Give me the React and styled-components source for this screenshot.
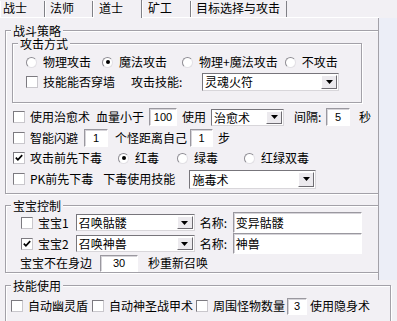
import React from 'react';
import styled, { createGlobalStyle } from 'styled-components';

const BG = '#f2f0f4';
const SHADOW = '#a3a1a8';
const DARK = '#808086';

const Global = createGlobalStyle`
  html, body { margin: 0; padding: 0; background: ${BG}; }
  body {
    font-family: "Noto Sans CJK SC", "Liberation Sans", sans-serif;
    font-size: 12px;
    color: #000;
  }
`;

const Screen = styled.div`
  width: 397px;
  height: 321px;
  overflow: hidden;
  display: flex;
  flex-direction: column;
  background: ${BG};
`;

const TabStrip = styled.div`
  box-sizing: border-box;
  width: 379px;
  height: 18px;
  display: flex;
  align-items: flex-end;
  border-bottom: 1px solid #fff;
`;

const Tab = styled.div`
  box-sizing: border-box;
  flex: none;
  width: ${p => p.$w}px;
  height: ${p => (p.$active ? 18 : 16)}px;
  margin-bottom: ${p => (p.$active ? -1 : 0)}px;
  padding-left: ${p => p.$pl}px;
  padding-top: ${p => (p.$active ? 1 : 0)}px;
  border-left: 1px solid #fff;
  border-right: 1px solid ${DARK};
  background: ${BG};
  line-height: 14px;
  white-space: nowrap;
`;

const Main = styled.div`
  display: flex;
  height: 262px;
`;

const Panel = styled.div`
  box-sizing: border-box;
  width: 379px;
  height: 262px;
  flex: none;
  overflow: hidden;
  border-right: 1px solid ${SHADOW};
  padding: 12px 0 0 5px;
  display: flex;
  flex-direction: column;
`;

const Strip = styled.div`
  flex: 1;
  background: #eceef7;
`;

const Group = styled.div`
  box-sizing: border-box;
  flex: none;
  width: ${p => p.$w}px;
  margin: ${p => p.$m || '0'};
  border: 1px solid ${SHADOW};
  box-shadow: inset 1px 1px 0 #fff, 1px 1px 0 #fff;
  padding: 0 0 ${p => p.$pb || 0}px 0;
  display: flex;
  flex-direction: column;
`;

const Legend = styled.div`
  align-self: flex-start;
  margin: -7px 0 0 5px;
  padding: 0 2px;
  height: 13px;
  line-height: 13px;
  background: ${BG};
  white-space: nowrap;
`;

const Row = styled.div`
  display: flex;
  align-items: center;
  height: ${p => p.$h || 20}px;
  margin-top: ${p => p.$mt || 0}px;
  padding-left: ${p => p.$pl || 0}px;
  white-space: nowrap;
`;

const Text = styled.span`
  flex: none;
  margin-left: ${p => p.$ml || 0}px;
  width: ${p => (p.$w ? `${p.$w}px` : 'auto')};
  line-height: 14px;
  white-space: nowrap;
`;

const Option = styled.label`
  flex: none;
  display: flex;
  align-items: center;
  gap: ${p => p.$gap || 6}px;
  margin-left: ${p => p.$ml || 0}px;
  line-height: 14px;
`;

const RadioCircle = styled.span`
  box-sizing: border-box;
  width: 11px;
  height: 11px;
  flex: none;
  border-radius: 50%;
  background: #fff;
  border: 1px solid;
  border-color: #8e8c93 #e2e0e5 #e2e0e5 #8e8c93;
  display: flex;
  align-items: center;
  justify-content: center;
  &::after {
    content: '';
    display: ${p => (p.$on ? 'block' : 'none')};
    width: 4px;
    height: 4px;
    border-radius: 50%;
    background: #000;
  }
`;

const CheckBox = styled.span`
  box-sizing: border-box;
  width: 12px;
  height: 12px;
  flex: none;
  background: #fff;
  border: 1px solid;
  border-color: #7c7a80 #c9c7cc #c9c7cc #7c7a80;
  display: flex;
  align-items: center;
  justify-content: center;
`;

const Field = styled.div`
  box-sizing: border-box;
  flex: none;
  width: ${p => p.$w}px;
  height: ${p => p.$h || 18}px;
  margin-left: ${p => p.$ml || 0}px;
  background: #fff;
  border: 1px solid;
  border-color: #9a989f #ffffff #ffffff #9a989f;
  box-shadow: inset 1px 1px 0 #d6d4d9;
  display: flex;
  align-items: center;
  justify-content: ${p => (p.$left ? 'flex-start' : 'center')};
  padding-left: ${p => (p.$left ? 2 : 0)}px;
  font-family: ${p => (p.$num ? '"Liberation Sans", sans-serif' : 'inherit')};
  font-size: ${p => (p.$num ? 11 : 12)}px;
  line-height: 14px;
  overflow: hidden;
`;

const ComboBox = styled.div`
  box-sizing: border-box;
  flex: none;
  width: ${p => p.$w}px;
  height: ${p => p.$h || 18}px;
  margin-left: ${p => p.$ml || 0}px;
  background: #fff;
  border: 1px solid;
  border-color: #77757b #d8d6da #d8d6da #77757b;
  display: flex;
  align-items: stretch;
`;

const ComboText = styled.span`
  flex: 1;
  padding-left: 2px;
  line-height: ${p => p.$lh}px;
  white-space: nowrap;
  overflow: hidden;
`;

const ComboButton = styled.span`
  box-sizing: border-box;
  flex: none;
  width: 16px;
  margin: 1px;
  background: #eceaee;
  border: 1px solid;
  border-color: #ffffff #6e6c72 #6e6c72 #ffffff;
  display: flex;
  align-items: center;
  justify-content: center;
`;

const Radio = ({ on, ml, children }) => (
  <Option $ml={ml}>
    <RadioCircle $on={on} />
    <span>{children}</span>
  </Option>
);

const Check = ({ on, ml, children }) => (
  <Option $ml={ml} $gap={5}>
    <CheckBox>
      {on && (
        <svg width="8" height="8" viewBox="0 0 8 8">
          <polyline points="0.8,3.6 2.9,5.8 7.2,1.2" fill="none" stroke="#000" strokeWidth="1.7" />
        </svg>
      )}
    </CheckBox>
    <span>{children}</span>
  </Option>
);

const Combo = ({ w, h = 18, ml, children }) => (
  <ComboBox $w={w} $h={h} $ml={ml}>
    <ComboText $lh={h - 2}>{children}</ComboText>
    <ComboButton>
      <svg width="7" height="4" viewBox="0 0 7 4">
        <polygon points="0,0 7,0 3.5,4" fill="#000" />
      </svg>
    </ComboButton>
  </ComboBox>
);

export default function App() {
  return (
    <Screen>
      <Global />
      <TabStrip>
        <Tab $w={45} $pl={2}>战士</Tab>
        <Tab $w={48} $pl={4}>法师</Tab>
        <Tab $w={49} $pl={5} $active>道士</Tab>
        <Tab $w={49} $pl={5}>矿工</Tab>
        <Tab $w={96} $pl={4}>目标选择与攻击</Tab>
      </TabStrip>

      <Main>
        <Panel>
          <Group $w={374} $pb={4}>
            <Legend>战斗策略</Legend>
            <Group $w={350} $m="6px 0 0 6px" $pb={10}>
              <Legend>攻击方式</Legend>
              <Row $mt={2} $pl={13}>
                <Radio>物理攻击</Radio>
                <Radio ml={11} on>魔法攻击</Radio>
                <Radio ml={15}>物理+魔法攻击</Radio>
                <Radio ml={7}>不攻击</Radio>
              </Row>
              <Row $pl={13}>
                <Check>技能能否穿墙</Check>
                <Text $ml={16} $w={52}>攻击技能:</Text>
                <Combo w={137} ml={19}>灵魂火符</Combo>
              </Row>
            </Group>

            <Row $mt={4} $pl={7}>
              <Check>使用治愈术</Check>
              <Text $ml={6}>血量小于</Text>
              <Field $w={28} $ml={5} $num>100</Field>
              <Text $ml={5}>使用</Text>
              <Combo w={73} h={17} ml={5}>治愈术</Combo>
              <Text $ml={10} $w={28}>间隔:</Text>
              <Field $w={24} $ml={4} $num>5</Field>
              <Text $ml={9}>秒</Text>
            </Row>
            <Row $mt={1} $pl={7}>
              <Check>智能闪避</Check>
              <Field $w={24} $ml={6} $num>1</Field>
              <Text $ml={7}>个怪距离自己</Text>
              <Field $w={23} $ml={3} $num>1</Field>
              <Text $ml={5}>步</Text>
            </Row>
            <Row $pl={7}>
              <Check on>攻击前先下毒</Check>
              <Radio ml={16} on>红毒</Radio>
              <Radio ml={18}>绿毒</Radio>
              <Radio ml={26}>红绿双毒</Radio>
            </Row>
            <Row $mt={1} $pl={7}>
              <Check>PK前先下毒</Check>
              <Text $ml={10}>下毒使用技能</Text>
              <Combo w={127} h={19} ml={14}>施毒术</Combo>
            </Row>
          </Group>

          <Group $w={374} $m="11px 0 0 0">
            <Legend>宝宝控制</Legend>
            <Row $h={21} $pl={15}>
              <Check>宝宝1</Check>
              <Combo w={119} h={17} ml={7}>召唤骷髅</Combo>
              <Text $ml={5} $w={32}>名称:</Text>
              <Field $w={129} $h={21} $ml={1} $left>变异骷髅</Field>
            </Row>
            <Row $h={21} $pl={15}>
              <Check on>宝宝2</Check>
              <Combo w={119} h={17} ml={7}>召唤神兽</Combo>
              <Text $ml={5} $w={32}>名称:</Text>
              <Field $w={129} $h={21} $ml={1} $left>神兽</Field>
            </Row>
            <Row $h={18} $pl={14}>
              <Text>宝宝不在身边</Text>
              <Field $w={38} $h={17} $ml={8} $num>30</Field>
              <Text $ml={10}>秒重新召唤</Text>
            </Row>
          </Group>
        </Panel>
        <Strip />
      </Main>

      <Group $w={386} $m="5px 0 0 5px" $pb={10}>
        <Legend>技能使用</Legend>
        <Row $mt={4} $pl={5}>
          <Check>自动幽灵盾</Check>
          <Check ml={4}>自动神圣战甲术</Check>
          <Check ml={3}>周围怪物数量</Check>
          <Field $w={20} $h={17} $ml={2} $num>3</Field>
          <Text $ml={3}>使用隐身术</Text>
        </Row>
      </Group>
    </Screen>
  );
}
